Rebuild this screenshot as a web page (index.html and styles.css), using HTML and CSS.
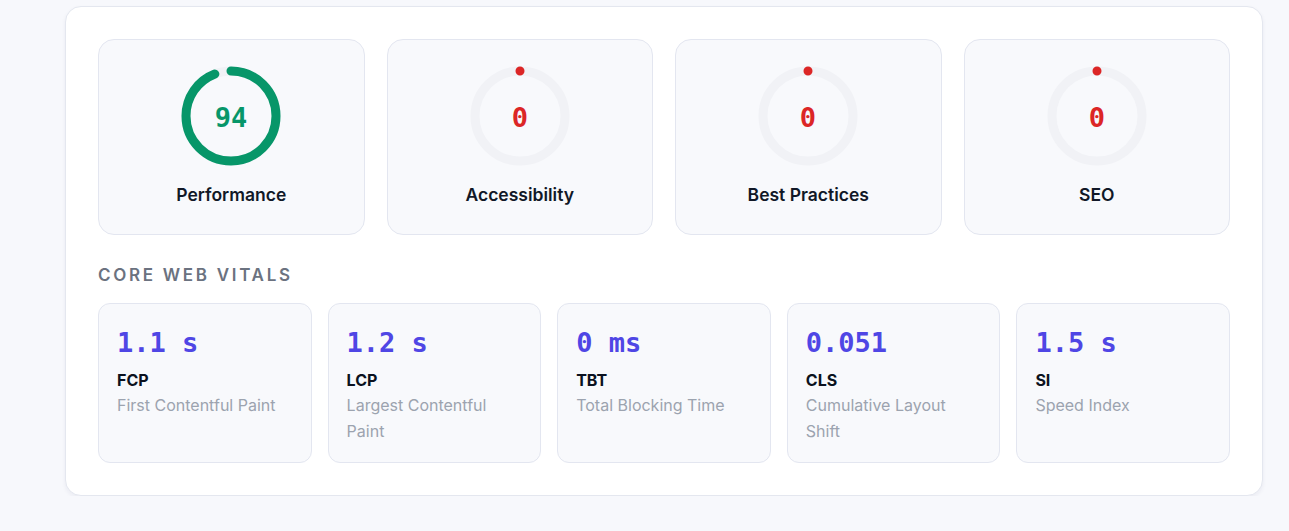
FILE: index.html
```html
<!DOCTYPE html>
<html lang="en">
<head>
    <meta charset="UTF-8">
    <meta name="viewport" content="width=device-width, initial-scale=1.0">
    <title>Lighthouse Report</title>
    <link rel="stylesheet" href="styles.css">
</head>
<body>
    <div class="report">
        <div class="scores">
            <div class="score-card">
                <svg class="gauge" viewBox="0 0 100 100">
                    <circle class="gauge-track" cx="50" cy="50" r="45"></circle>
                    <circle class="gauge-arc good" cx="50" cy="50" r="45" stroke-dasharray="265.77 282.74"></circle>
                    <text class="gauge-value good" x="50" y="53">94</text>
                </svg>
                <div class="score-label">Performance</div>
            </div>
            <div class="score-card">
                <svg class="gauge" viewBox="0 0 100 100">
                    <circle class="gauge-track" cx="50" cy="50" r="45"></circle>
                    <circle class="gauge-arc bad" cx="50" cy="50" r="45" stroke-dasharray="0.01 282.74"></circle>
                    <text class="gauge-value bad" x="50" y="53">0</text>
                </svg>
                <div class="score-label">Accessibility</div>
            </div>
            <div class="score-card">
                <svg class="gauge" viewBox="0 0 100 100">
                    <circle class="gauge-track" cx="50" cy="50" r="45"></circle>
                    <circle class="gauge-arc bad" cx="50" cy="50" r="45" stroke-dasharray="0.01 282.74"></circle>
                    <text class="gauge-value bad" x="50" y="53">0</text>
                </svg>
                <div class="score-label">Best Practices</div>
            </div>
            <div class="score-card">
                <svg class="gauge" viewBox="0 0 100 100">
                    <circle class="gauge-track" cx="50" cy="50" r="45"></circle>
                    <circle class="gauge-arc bad" cx="50" cy="50" r="45" stroke-dasharray="0.01 282.74"></circle>
                    <text class="gauge-value bad" x="50" y="53">0</text>
                </svg>
                <div class="score-label">SEO</div>
            </div>
        </div>

        <h2 class="section-title">Core Web Vitals</h2>

        <div class="vitals">
            <div class="vital-card">
                <div class="vital-value">1.1 s</div>
                <div class="vital-name">FCP</div>
                <div class="vital-desc">First Contentful Paint</div>
            </div>
            <div class="vital-card">
                <div class="vital-value">1.2 s</div>
                <div class="vital-name">LCP</div>
                <div class="vital-desc">Largest Contentful Paint</div>
            </div>
            <div class="vital-card">
                <div class="vital-value">0 ms</div>
                <div class="vital-name">TBT</div>
                <div class="vital-desc">Total Blocking Time</div>
            </div>
            <div class="vital-card">
                <div class="vital-value">0.051</div>
                <div class="vital-name">CLS</div>
                <div class="vital-desc">Cumulative Layout Shift</div>
            </div>
            <div class="vital-card">
                <div class="vital-value">1.5 s</div>
                <div class="vital-name">SI</div>
                <div class="vital-desc">Speed Index</div>
            </div>
        </div>
    </div>
</body>
</html>
```

FILE: styles.css
```css
body {
    font-family: Inter, "Noto Sans", sans-serif;
    margin: 0;
    padding: 6px 0 0 65px;
    background-color: #f7f8fc;
    color: #111827;
}

.report {
    width: 1132px;
    padding: 32px;
    background-color: #ffffff;
    border: 1px solid #e4e7ef;
    border-radius: 16px;
    box-shadow: 0 2px 4px rgba(30, 41, 80, 0.06);
}

/* Score gauges */
.scores {
    display: grid;
    grid-template-columns: repeat(4, 1fr);
    gap: 22px;
}

.score-card {
    display: flex;
    flex-direction: column;
    align-items: center;
    gap: 16px;
    padding: 26px 16px;
    background-color: #f8f9fc;
    border: 1px solid #e3e6f0;
    border-radius: 16px;
}

.gauge {
    width: 100px;
    height: 100px;
    display: block;
}

.gauge-track {
    fill: none;
    stroke: #f1f2f6;
    stroke-width: 9;
}

.gauge-arc {
    fill: none;
    stroke-width: 9;
    stroke-linecap: round;
    transform: rotate(-90deg);
    transform-origin: 50px 50px;
}

.gauge-arc.good {
    stroke: #079669;
}

.gauge-arc.bad {
    stroke: #dc2626;
}

.gauge-value {
    font-family: "DejaVu Sans Mono", monospace;
    font-weight: bold;
    font-size: 27px;
    text-anchor: middle;
    dominant-baseline: middle;
}

.gauge-value.good {
    fill: #079669;
}

.gauge-value.bad {
    fill: #dc2626;
}

.score-label {
    font-size: 17.5px;
    font-weight: 600;
    line-height: 26px;
    color: #111827;
}

/* Core web vitals */
.section-title {
    margin: 28px 0 16px;
    font-size: 17px;
    font-weight: 600;
    line-height: 24px;
    letter-spacing: 2.7px;
    text-transform: uppercase;
    color: #6b7280;
}

.vitals {
    display: grid;
    grid-template-columns: repeat(5, 1fr);
    gap: 16px;
}

.vital-card {
    padding: 18px;
    background-color: #f8f9fc;
    border: 1px solid #e3e6f0;
    border-radius: 12px;
}

.vital-value {
    font-family: "DejaVu Sans Mono", monospace;
    font-weight: bold;
    font-size: 27px;
    line-height: 42px;
    color: #4f46e5;
}

.vital-name {
    margin-top: 4px;
    font-size: 16px;
    font-weight: 700;
    line-height: 24px;
    color: #0b1220;
}

.vital-desc {
    font-size: 16px;
    line-height: 26px;
    color: #9ca3af;
}
```
